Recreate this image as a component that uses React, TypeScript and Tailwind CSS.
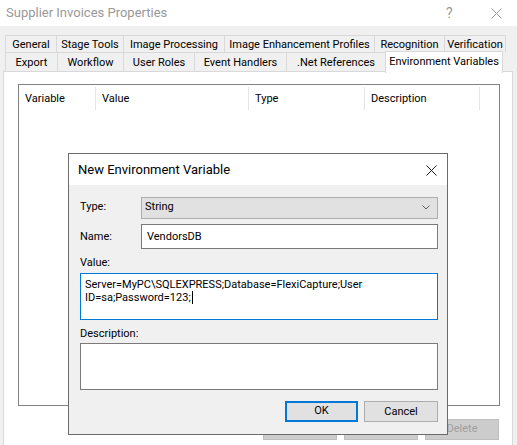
import React from 'react';

const rowOne = [
  { label: 'General', w: 'w-[51px]' },
  { label: 'Stage Tools', w: 'w-[67px]' },
  { label: 'Image Processing', w: 'w-[101px]' },
  { label: 'Image Enhancement Profiles', w: 'w-[150px]' },
  { label: 'Recognition', w: 'w-[70px]' },
  { label: 'Verification', w: 'w-[62px]', last: true },
];

const rowTwo = [
  { label: 'Export', w: 'w-[52px]' },
  { label: 'Workflow', w: 'w-[66px]' },
  { label: 'User Roles', w: 'w-[71px]' },
  { label: 'Event Handlers', w: 'w-[92px]' },
  { label: '.Net References', w: 'w-[99px]' },
];

const columns = [
  { label: 'Variable', w: 'w-[77px]' },
  { label: 'Value', w: 'w-[153px]' },
  { label: 'Type', w: 'w-[116px]' },
  { label: 'Description', w: 'w-[115px]' },
];

function CloseGlyph({ color }: { color: string }) {
  return (
    <svg width="11" height="11" viewBox="0 0 11 11" className="block">
      <path d="M0.5 0.5 L10.5 10.5 M10.5 0.5 L0.5 10.5" stroke={color} strokeWidth="1" fill="none" />
    </svg>
  );
}

function NewVariableDialog() {
  return (
    <div className="absolute left-[68px] top-[153px] w-[380px] h-[282px] border border-[#6b6b6b] bg-[#f0f0f0] flex flex-col">
      <div className="h-[31px] bg-white flex items-center justify-between pl-[9px] pr-[10px] pt-px">
        <span className="text-[13px] text-black">New Environment Variable</span>
        <CloseGlyph color="#1a1a1a" />
      </div>

      <div className="flex flex-col pl-[11px] pt-[11px]">
        <div className="flex items-center h-[22px] pt-px">
          <span className="w-[61px]">Type:</span>
          <div className="w-[297px] h-[22px] bg-[#e1e1e1] border border-[#adadad] flex items-center justify-between pl-[3px] pr-[7px]">
            <span>String</span>
            <svg width="8" height="5" viewBox="0 0 8 5" className="block">
              <path d="M0.5 0.5 L4 4 L7.5 0.5" stroke="#606060" strokeWidth="1" fill="none" />
            </svg>
          </div>
        </div>

        <div className="flex items-center h-[25px] mt-[6px]">
          <span className="w-[61px] pt-px">Name:</span>
          <div className="w-[297px] h-[25px] bg-white border border-[#7a7a7a] flex items-center pl-[5px] pt-px">
            VendorsDB
          </div>
        </div>

        <div className="mt-[5px] h-[16px] leading-[16px] pt-px">Value:</div>
        <div className="mt-[3px] w-[358px] h-[47px] bg-white border border-[#0078d7] pl-[4px] pt-[4px] leading-[13px]">
          <div>Server=MyPC\SQLEXPRESS;Database=FlexiCapture;User</div>
          <div className="flex items-center">
            <span>ID=sa;Password=123;</span>
            <span className="inline-block w-px h-[13px] bg-black ml-px" />
          </div>
        </div>

        <div className="mt-[5px] h-[16px] leading-[16px] pt-px">Description:</div>
        <div className="mt-[2px] w-[358px] h-[47px] bg-white border border-[#7a7a7a]" />

        <div className="mt-[11px] w-[358px] flex justify-end gap-[6px]">
          <button className="w-[73px] h-[21px] bg-[#e1e1e1] border-2 border-[#0078d7] flex items-center justify-center">
            OK
          </button>
          <button className="w-[74px] h-[21px] bg-[#e1e1e1] border border-[#adadad] flex items-center justify-center pt-px">
            Cancel
          </button>
        </div>
      </div>
    </div>
  );
}

export default function App() {
  return (
    <div className="relative w-[517px] h-[445px] overflow-hidden bg-[#f0f0f0] text-[11px] text-black font-['Segoe_UI',Roboto,sans-serif]">
      <div className="h-[26px] bg-white flex items-center pl-[6px]">
        <span className="text-[13px] text-[#999999] flex-1">Supplier Invoices Properties</span>
        <span className="text-[14px] text-[#999999] w-[12px] mr-[33px]">?</span>
        <span className="mr-[15px]">
          <CloseGlyph color="#999999" />
        </span>
      </div>

      <div className="mt-[9px] pl-[5px]">
        <div className="flex h-[17px]">
          {rowOne.map((t) => (
            <div
              key={t.label}
              className={`${t.w} h-[17px] border-t border-l border-[#d9d9d9] flex items-center justify-center whitespace-nowrap pt-[3px] ${t.last ? 'border-r' : ''}`}
            >
              {t.label}
            </div>
          ))}
        </div>
        <div className="flex h-[19px] items-start">
          {rowTwo.map((t) => (
            <div
              key={t.label}
              className={`${t.w} h-[19px] border-t border-l border-[#d9d9d9] flex items-center justify-center whitespace-nowrap pt-[3px]`}
            >
              {t.label}
            </div>
          ))}
          <div className="relative z-10 w-[118px] h-[22px] -mt-[1px] bg-white border-t border-l border-r border-[#d9d9d9] flex items-center justify-center whitespace-nowrap">
            Environment Variables
          </div>
        </div>
      </div>

      <div className="ml-[3px] w-[510px] h-[400px] bg-white border border-[#d9d9d9] pt-[12px] pl-[14px]">
        <div className="w-[482px] h-[322px] border border-[#828282]">
          <div className="flex h-[26px]">
            {columns.map((c) => (
              <div key={c.label} className={`${c.w} flex items-center justify-between pl-[6px]`}>
                <span className="pt-[2px]">{c.label}</span>
                <span className="w-px h-[23px] bg-[#e5e5e5]" />
              </div>
            ))}
          </div>
        </div>
        <div className="mt-[13px] w-[482px] flex justify-end gap-[7px] pr-px">
          <button className="w-[74px] h-[21px] bg-[#cccccc] border border-[#bfbfbf] text-[#a0a0a0]">Add...</button>
          <button className="w-[74px] h-[21px] bg-[#cccccc] border border-[#bfbfbf] text-[#a0a0a0]">Edit...</button>
          <button className="w-[74px] h-[21px] bg-[#cccccc] border border-[#bfbfbf] text-[#a0a0a0]">Delete</button>
        </div>
      </div>

      <NewVariableDialog />
    </div>
  );
}
